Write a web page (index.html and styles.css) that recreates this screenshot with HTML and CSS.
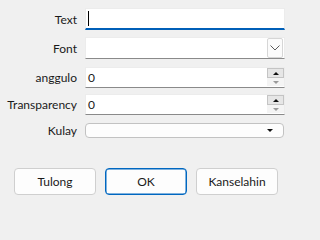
FILE: index.html
```html
<!DOCTYPE html>
<html>
<head>
<meta charset="utf-8">
<link rel="stylesheet" href="styles.css">
</head>
<body>
<div class="dialog">
  <div class="row row-text">
    <label class="lbl">Text</label>
    <div class="field edit focused"><span class="caret"></span></div>
  </div>
  <div class="row row-font">
    <label class="lbl">Font</label>
    <div class="field edit combo">
      <span class="drop-btn">
        <svg width="10" height="6" viewBox="0 0 10 6"><path d="M0.5 0.5 L5 5 L9.5 0.5" fill="none" stroke="#5a5a5a" stroke-width="1"/></svg>
      </span>
    </div>
  </div>
  <div class="row row-angle">
    <label class="lbl">anggulo</label>
    <div class="field edit spin"><span class="val">0</span>
      <span class="spin-btns"><span class="up"><i class="tri-up"></i></span><span class="down"><i class="tri-down light"></i></span></span>
    </div>
  </div>
  <div class="row row-trans">
    <label class="lbl">Transparency</label>
    <div class="field edit spin"><span class="val">0</span>
      <span class="spin-btns"><span class="up"><i class="tri-up"></i></span><span class="down"><i class="tri-down light"></i></span></span>
    </div>
  </div>
  <div class="row row-color">
    <label class="lbl">Kulay</label>
    <div class="field color-combo"><i class="tri-down"></i></div>
  </div>
  <div class="buttons">
    <button class="btn">Tulong</button>
    <button class="btn default">OK</button>
    <button class="btn">Kanselahin</button>
  </div>
</div>
</body>
</html>
```
FILE: styles.css
```css
html, body {
  margin: 0;
  padding: 0;
  background: #f0f0f0;
  font-family: "Lato", "Liberation Sans", sans-serif;
  font-size: 12px;
  color: #1a1a1a;
}
.dialog {
  width: 293px;
  height: 210px;
  padding-top: 8px;
  box-sizing: border-box;
  display: flex;
  flex-direction: column;
}
.row {
  display: grid;
  grid-template-columns: 77px 200px;
  column-gap: 8px;
  align-items: center;
}
.lbl {
  text-align: right;
  white-space: nowrap;
  line-height: 14px;
  padding-top: 1px;
}
.row-text { height: 22px; }
.row-font { height: 22px; margin-top: 7px; }
.row-angle { height: 21px; margin-top: 8px; }
.row-trans { height: 21px; margin-top: 6px; }
.row-color { height: 14px; margin-top: 8px; grid-template-columns: 77px 199px; }

.field {
  position: relative;
  box-sizing: border-box;
  height: 100%;
}
.edit {
  background: #ffffff;
  border: 1px solid #ececec;
  border-bottom: 1px solid #8a8a8a;
  display: flex;
  align-items: center;
  padding-left: 2px;
}
.edit.focused {
  border-bottom: 2px solid #005fb8;
}
.caret {
  display: block;
  width: 1px;
  height: 15px;
  background: #000;
  margin-left: 0;
}
.val { line-height: 14px; padding-left: 0; padding-top: 1px; }
.drop-btn {
  position: absolute;
  right: 1px;
  top: 0;
  width: 16px;
  height: 20px;
  box-sizing: border-box;
  border: 1px solid #d6d6d6;
  border-radius: 2px;
  background: #fbfbfb;
  display: flex;
  align-items: center;
  justify-content: center;
}
.spin-btns {
  position: absolute;
  right: 0;
  top: 0;
  width: 17px;
  height: 18px;
  display: flex;
  flex-direction: column;
}
.spin-btns .up, .spin-btns .down {
  flex: 1;
  display: flex;
  align-items: center;
  justify-content: center;
  box-sizing: border-box;
}
.spin-btns .up {
  border: 1px solid #c4c4c4;
  background: #e6e6e6;
}
.spin-btns .down {
  background: #f4f4f4;
}
.tri-up {
  width: 0; height: 0;
  border-left: 3px solid transparent;
  border-right: 3px solid transparent;
  border-bottom: 3px solid #111;
}
.tri-down {
  width: 0; height: 0;
  border-left: 3px solid transparent;
  border-right: 3px solid transparent;
  border-top: 3px solid #111;
}
.tri-down.light { border-top-color: #9a9a9a; }
.color-combo {
  background: #fdfdfd;
  border: 1px solid #c2c2c2;
  border-radius: 4px;
  display: flex;
  align-items: center;
  justify-content: flex-end;
  padding-right: 10px;
}
.buttons {
  display: flex;
  gap: 9px;
  margin-top: 31px;
  padding-left: 14px;
}
.btn {
  width: 82px;
  height: 27px;
  box-sizing: border-box;
  background: #fdfdfd;
  border: 1px solid #cfcfcf;
  border-radius: 4px;
  font-family: inherit;
  font-size: 12px;
  color: #1a1a1a;
  padding: 0;
}
.btn.default {
  border: 1px solid #0067c0;
  box-shadow: inset 0 0 0 0.5px #0067c0;
}
```
